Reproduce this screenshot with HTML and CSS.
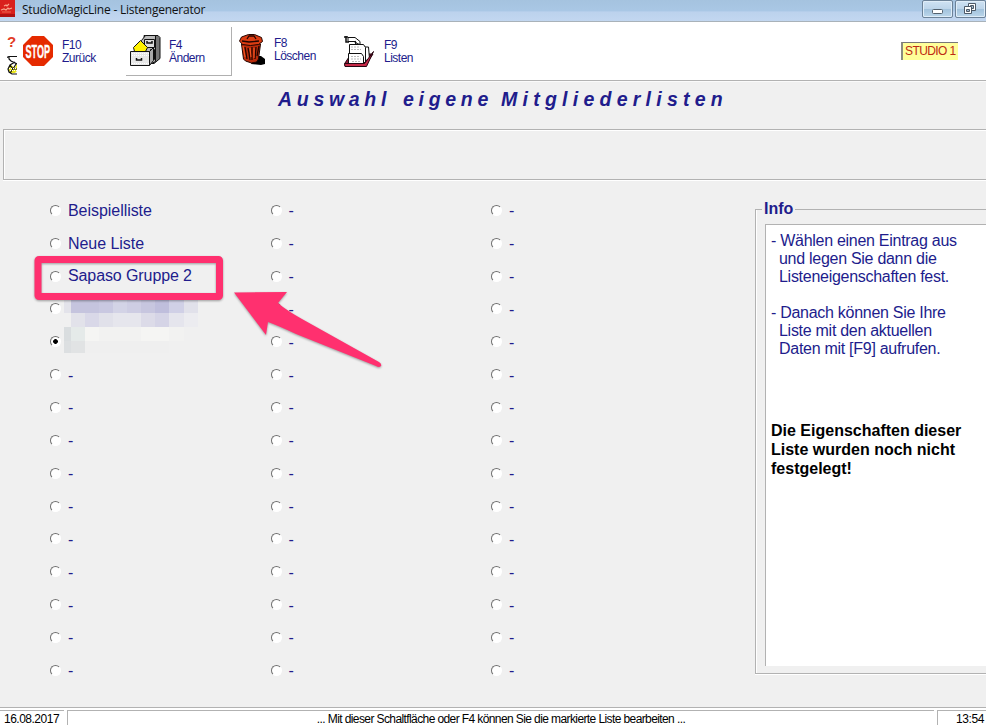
FILE: index.html
```html
<!DOCTYPE html>
<html lang="de">
<head>
<meta charset="utf-8">
<title>StudioMagicLine - Listengenerator</title>
<link rel="stylesheet" href="styles.css">
</head>
<body>
<div class="window">
  <header class="titlebar">
    <svg class="app-icon" width="16" height="18" viewBox="0 0 16 18"><path fill="#d9201c" d="M0 0h15v17H0z"/><path fill="#b11212" d="M0 14h15v3H0z"/><path fill="none" stroke="#f9a48a" stroke-width="1.2" d="M1 10l3-1 2 1 2-2 1 1 3-1M4 6l2-1 1 1 2-2"/><path fill="none" stroke="#ee6650" d="M2 12h9"/></svg>
    <span class="title">StudioMagicLine - Listengenerator</span>
    <div class="controls">
      <span class="control"><svg width="29" height="16" viewBox="0 0 29 16"><rect x="9.500" y="8.500" width="10" height="4" rx="1" fill="#fff" stroke="#53616e"/></svg></span>
      <span class="control"><svg width="29" height="16" viewBox="0 0 29 16"><g fill="#fff" stroke="#4c5967"><path d="M12.500 2.500h7v7h-7z"/><path fill="#9fb7cc" d="M14.500 4.500h3v3h-3z"/><path d="M8.500 5.500h7v7h-7z"/><path fill="#9fb7cc" d="M10.500 8.500h3v2h-3z"/></g></svg></span>
    </div>
  </header>
  <nav class="toolbar">
    <div class="mini">
      <span class="question">?</span>
      <svg width="10" height="20" viewBox="0 0 10 20"><path fill="#fff" d="M1 2h9v16H2z"/><path fill="#e8e51c" d="M10 8v8l-2 2H3l-2-4 3-4 4 3z"/><path fill="none" stroke="#111" stroke-width="1.200" d="M0 2.500l2-1h8M2 2v2l2 2 6 3M8 7L3 10l-2 4 1 3 3 2h5M3 10l3 4h4M9 9l-3 5-3 4"/><path stroke="#fff" stroke-dasharray="1 1" d="M2 13.500h8M3 15.500h7"/></svg>
    </div>
    <div class="tool stop">
      <svg width="30" height="30" viewBox="0 0 30 30"><path fill="#e52a00" d="M9 0h12l9 9v12l-9 9H9l-9-9V9z"/><text class="stop-text" transform="translate(2.500 21.500) scale(.49 1)">STOP</text></svg>
      <span class="label">F10<br>Zurück</span>
    </div>
    <div class="tool change">
      <svg width="31" height="32" viewBox="0 0 31 32"><path fill="#777" stroke="#111" d="M14 .5h14l2 2v21l-6 5h-8z"/><path fill="#bbb" stroke="#111" d="M11.500 5.500l4-5h10v26l-6 3-8-12z"/><path fill="#ddd" stroke="#111" d="M14.500 4.500h10v8h-10zM20.500 14.500h4v10h-4z"/><path fill="none" stroke="#111" stroke-width="1.500" d="M17 6v2h5v-2"/><path fill="#fff200" stroke="#111" d="M3.500 12.500l7-7 7 7-2 4h-11z"/><path fill="#aaa" stroke="#111" d="M19.500 16.500l4-4v13l-4 5z"/><path fill="#e7e7e7" stroke="#111" d="M.5 16.500h19v14H.5z"/><path fill="none" stroke="#fff" stroke-dasharray="1 1" d="M2 18.500h17M2 20.500h17M2 28.500h17"/><path fill="none" stroke="#111" stroke-width="1.500" d="M6.500 23v2h5v-2"/></svg>
      <span class="label">F4<br>Ändern</span>
    </div>
    <div class="tool delete">
      <svg width="27" height="32" viewBox="0 0 27 32"><path fill="#000" d="M15 22h7l4 3v5l-4 1-10-1z"/><path fill="#b92b0b" stroke="#230500" d="M2.500 10h19l-2 15-2 3-5 1-6-2-2-2z"/><path fill="#db3c12" stroke="#230500" d="M.5 7l2-4 7-2.500h6l7 3 1 4-4 3-8 1-8-1z"/><path fill="none" stroke="#230500" stroke-width="1.300" d="M8 5l2-3h5l2 3M3 7l7 1 10-1M6 13l2 12M9 14l1 5 1 7M13 13v13M17 13l-1 12M20 12l-2 10"/><path fill="none" stroke="#fa5b26" d="M4 12l2 11M11 14l1 9M15 14v10"/></svg>
      <span class="label">F8<br>Löschen</span>
    </div>
    <div class="tool lists">
      <svg width="31" height="33" viewBox="0 0 31 33"><path fill="#8f1837" stroke="#260611" d="M1 28l6-9h22l-8 12H1z"/><path fill="#a13bae" d="M20 23l6-1-4 7z"/><path fill="#fff" stroke="#111" d="M20.500 12h4l1 12-5 2z"/><path fill="#fff" stroke="#111" d="M5.500 9.500h14l2 3v15h-16z"/><path fill="#fff" stroke="#111" d="M4.500 18.500h13l2 3v7h-15z"/><path stroke="#bbb" stroke-dasharray="2 1" d="M7 12h9M7 14.500h10M7 21.500h8M7 24h10M8 26.500h9"/><path fill="#fff" stroke="#111" d="M4 2.500h7l5 4v3l-3-1-2-2H4z"/><path fill="none" stroke="#111" stroke-width="1.500" d="M0 2h4M2 1v6h3M12 9l-1-3"/><path fill="#c62947" stroke="#260611" d="M.5 28.500h20l9-12-7 15H1z"/></svg>
      <span class="label">F9<br>Listen</span>
    </div>
    <div class="studio">STUDIO 1</div>
  </nav>
  <main class="main">
    <h1 class="heading"><span class="w1">Auswahl</span><span class="w2">eigene</span><span class="w3">Mitgliederlisten</span></h1>
    <div class="band"></div>
    <div class="content">
      <div class="options">
        <label class="opt"><i class="radio"></i>Beispielliste</label>
        <label class="opt"><i class="radio"></i>Neue Liste</label>
        <label class="opt marked"><i class="radio"></i>Sapaso Gruppe 2</label>
        <label class="opt"><i class="radio"></i></label>
        <label class="opt"><i class="radio checked"></i></label>
        <label class="opt dash"><i class="radio"></i>-</label>
        <label class="opt dash"><i class="radio"></i>-</label>
        <label class="opt dash"><i class="radio"></i>-</label>
        <label class="opt dash"><i class="radio"></i>-</label>
        <label class="opt dash"><i class="radio"></i>-</label>
        <label class="opt dash"><i class="radio"></i>-</label>
        <label class="opt dash"><i class="radio"></i>-</label>
        <label class="opt dash"><i class="radio"></i>-</label>
        <label class="opt dash"><i class="radio"></i>-</label>
        <label class="opt dash"><i class="radio"></i>-</label>
        <label class="opt dash"><i class="radio"></i>-</label>
        <label class="opt dash"><i class="radio"></i>-</label>
        <label class="opt dash"><i class="radio"></i>-</label>
        <label class="opt dash"><i class="radio"></i>-</label>
        <label class="opt dash"><i class="radio"></i>-</label>
        <label class="opt dash"><i class="radio"></i>-</label>
        <label class="opt dash"><i class="radio"></i>-</label>
        <label class="opt dash"><i class="radio"></i>-</label>
        <label class="opt dash"><i class="radio"></i>-</label>
        <label class="opt dash"><i class="radio"></i>-</label>
        <label class="opt dash"><i class="radio"></i>-</label>
        <label class="opt dash"><i class="radio"></i>-</label>
        <label class="opt dash"><i class="radio"></i>-</label>
        <label class="opt dash"><i class="radio"></i>-</label>
        <label class="opt dash"><i class="radio"></i>-</label>
        <label class="opt dash"><i class="radio"></i>-</label>
        <label class="opt dash"><i class="radio"></i>-</label>
        <label class="opt dash"><i class="radio"></i>-</label>
        <label class="opt dash"><i class="radio"></i>-</label>
        <label class="opt dash"><i class="radio"></i>-</label>
        <label class="opt dash"><i class="radio"></i>-</label>
        <label class="opt dash"><i class="radio"></i>-</label>
        <label class="opt dash"><i class="radio"></i>-</label>
        <label class="opt dash"><i class="radio"></i>-</label>
        <label class="opt dash"><i class="radio"></i>-</label>
        <label class="opt dash"><i class="radio"></i>-</label>
        <label class="opt dash"><i class="radio"></i>-</label>
        <label class="opt dash"><i class="radio"></i>-</label>
        <label class="opt dash"><i class="radio"></i>-</label>
        <label class="opt dash"><i class="radio"></i>-</label>
      </div>
      <fieldset class="info">
        <legend>Info</legend>
        <div class="info-box">
          <p class="hint">- Wählen einen Eintrag aus<br><span>und legen Sie dann die</span><br><span>Listeneigenschaften fest.</span></p>
          <p class="hint">- Danach können Sie Ihre<br><span>Liste mit den aktuellen</span><br><span>Daten mit [F9] aufrufen.</span></p>
          <p class="notice">Die Eigenschaften dieser<br>Liste wurden noch nicht<br>festgelegt!</p>
        </div>
      </fieldset>
    </div>
  </main>
  <footer class="status">
    <span class="cell date">16.08.2017</span>
    <span class="cell message">... Mit dieser Schaltfläche oder F4 können Sie die markierte Liste bearbeiten ...</span>
    <span class="cell time">13:54</span>
  </footer>
  <svg class="overlay" width="400" height="200" viewBox="0 190 400 200">
    <g shape-rendering="crispEdges">
      <path fill="#e3e3ea" d="M64 298h7v15h-7z"/><path fill="#c5c4de" d="M71 298h28v15H71z"/><path fill="#c9c8e1" d="M99 298h14v15H99z"/><path fill="#d3d3e6" d="M113 298h14v15h-14z"/><path fill="#cecde3" d="M127 298h14v15h-14z"/><path fill="#c7c6df" d="M141 298h14v15h-14z"/><path fill="#bfbedc" d="M155 298h14v15h-14z"/><path fill="#d0d0e6" d="M169 298h15v15h-15z"/><path fill="#e1e1ea" d="M184 298h14v15h-14z"/>
      <path fill="#e2e2ea" d="M71 313h14v14H71z"/><path fill="#d9d8e8" d="M85 313h14v14H85z"/><path fill="#e1e1ea" d="M99 313h14v14H99z"/><path fill="#e6e6ed" d="M113 313h28v14h-28z"/><path fill="#dcdbe8" d="M141 313h14v14h-14z"/><path fill="#d5d4e6" d="M155 313h14v14h-14z"/><path fill="#e5e5ed" d="M169 313h15v14h-15z"/><path fill="#ececf0" d="M184 313h14v14h-14z"/>
      <path fill="#d9dddf" d="M64 327h7v14h-7z"/><path fill="#e5eae9" d="M71 327h14v14H71z"/><path fill="#f5f5f3" d="M85 327h14v14H85z"/><path fill="#f2f2f1" d="M99 327h42v14H99z"/><path fill="#f5f5f3" d="M141 327h28v14h-28z"/><path fill="#f2f2f1" d="M169 327h15v14h-15z"/>
      <path fill="#dcdfe1" d="M64 341h7v12h-7z"/><path fill="#e1e3e4" d="M71 341h14v12H71z"/><path fill="#efefef" d="M85 341h84v12H85z"/>
    </g>
    <rect class="shadowed" x="38" y="259.500" width="181.500" height="37" rx="1" fill="none" stroke="#ff306f" stroke-width="7" stroke-linejoin="round"/>
    <path class="shadowed" fill="#ff306f" d="M234 292.500L287 292 278 303Q286 310 302 319L379 362Q382 364 381 366 379 368 376 366L296 334Q279 326 268 322L266 335Z"/>
  </svg>
</div>
</body>
</html>
```
FILE: styles.css
```css
* { box-sizing: border-box; }
body { margin: 0; width: 986px; height: 725px; overflow: hidden; font-family: "Liberation Sans", Arial, sans-serif; color: #211c8c; background: #f0f0f0; }
.window { position: relative; display: flex; flex-direction: column; width: 986px; height: 725px; }
svg { display: block; flex: none; }
.titlebar { display: flex; height: 22px; flex: none; background: linear-gradient(#a5c3df, #a9c7e5 50%, #bcd2ed 58%, #c2d7f0); border-bottom: 1px solid #a9b2b9; }
.title { margin-left: 6px; font: 12px/20px "Open Sans", "Noto Sans", sans-serif; letter-spacing: -.23px; color: #111; white-space: nowrap; }
.controls { display: flex; gap: 2px; margin-left: auto; }
.control { width: 31px; height: 18px; border: 1px solid #6c8298; border-radius: 2px; background: linear-gradient(#cfe2f3, #bdd5ea 48%, #a2c2dc 52%, #bcd7eb); box-shadow: inset 0 0 0 1px #dfedf8; overflow: hidden; }
.toolbar { display: flex; height: 60px; flex: none; background: #fff; border-bottom: 1px solid #fafafa; box-shadow: inset 0 -1px #b2b2b2; }
.mini { width: 23px; padding: 10px 0 0 7px; }
.mini svg { margin-top: 3px; }
.question { display: block; height: 20px; font: bold 15px/20px "Liberation Sans", sans-serif; color: #e23d28; }
.tool { display: flex; align-items: flex-start; }
.label { font-size: 12px; line-height: 13px; letter-spacing: -.5px; white-space: nowrap; }
.stop { width: 103px; padding-top: 14px; }
.stop .label { margin: 3px 0 0 9px; }
.stop-text { font: bold 18.5px "Liberation Sans", sans-serif; fill: #fff; stroke: #fff; stroke-width: .4px; }
.change { width: 106px; height: 54px; padding: 13px 0 0 4px; border-right: 1px solid #b0b0b0; border-bottom: 1px solid #b0b0b0; clip-path: inset(5px 0 0 0); }
.change .label { margin: 4px 0 0 8px; }
.delete { width: 112px; padding: 12px 0 0 7px; }
.delete .label { margin: 3px 0 0 8px; }
.lists { padding-top: 13px; }
.lists .label { margin: 4px 0 0 9px; }
.studio { width: 57px; height: 18px; margin: 20px 28px 0 auto; padding-left: 2px; font-size: 12px; line-height: 16px; letter-spacing: -.6px; white-space: nowrap; color: #bd2a13; background: #ffff99; border-top: 1px solid #777; border-left: 2px solid #8b8b80; }
.main { flex: none; height: 625px; display: flex; flex-direction: column; }
.heading { display: flex; flex: none; height: 47px; margin: 0; padding-left: 278px; font-size: 19.5px; font-style: italic; line-height: 35px; letter-spacing: 4.7px; white-space: nowrap; }
.w1 { width: 125px; }
.w2 { width: 98px; }
.w3 { letter-spacing: 5.25px; }
.band { flex: none; height: 51px; margin-left: 3px; border: 1px solid #b2b2b2; border-right: 0; box-shadow: inset 1px 1px #fff, 0 1px #fff; }
.content { display: flex; height: 527px; }
.options { flex: none; display: grid; grid-template-rows: repeat(15, 32.857px); grid-template-columns: 220.500px 220.500px 264px; grid-auto-flow: column; height: 493px; margin-top: 14px; padding-left: 50px; }
.opt { display: flex; align-items: center; padding-top: 1px; font-size: 16px; letter-spacing: -.05px; white-space: nowrap; }
.marked { padding-top: 0; letter-spacing: -.1px; }
.dash { padding-top: 2px; }
.radio { flex: none; width: 11px; height: 11px; margin: 0 7px 1px 0; border: 1.5px solid; border-color: #707070 #fff #fff #707070; border-radius: 50%; background: #fff; }
.marked .radio { margin-bottom: 0; }
.dash .radio { margin-bottom: 2px; }
.checked { background: radial-gradient(circle, #000 0 2px, #fff 2.700px); }
.info { flex: none; width: 235px; height: 474px; margin: 20px 0 0; padding: 0 0 0 9px; border: 1px solid #b2b2b2; border-right: 0; box-shadow: inset 1px 0 #fff, 0 1px #fff; }
.info legend { margin-left: -3px; padding: 0 2px; font-size: 16px; font-weight: bold; line-height: 18px; }
.info-box { height: 442px; margin-top: 6px; padding: 7px 0 0 5px; background: #fff; border-top: 1px solid #b2b2b2; border-left: 1px solid #b2b2b2; }
.hint { margin: 0 0 18px; font-size: 16px; line-height: 18px; letter-spacing: -.28px; white-space: nowrap; }
.hint span { margin-left: 8px; }
.notice { margin: 63px 0 0; font-size: 16px; font-weight: bold; line-height: 19px; color: #000; white-space: nowrap; }
.status { display: flex; flex: none; height: 18px; gap: 3px; padding-top: 3px; background: #fff; box-shadow: inset 0 1px #b2b2b2; color: #000; font-size: 12px; line-height: 16px; letter-spacing: -.6px; }
.cell { border-top: 1px solid #b2b2b2; border-left: 1px solid #b2b2b2; white-space: nowrap; }
.date { width: 64px; padding-left: 4px; border-left: 0; letter-spacing: -.5px; }
.message { width: 867px; text-align: center; }
.time { flex: 1; padding-left: 18px; letter-spacing: -.4px; }
.overlay { position: absolute; left: 0; top: 190px; pointer-events: none; }
.shadowed { filter: drop-shadow(0 1px 1px rgba(0, 0, 0, .35)); }
```
